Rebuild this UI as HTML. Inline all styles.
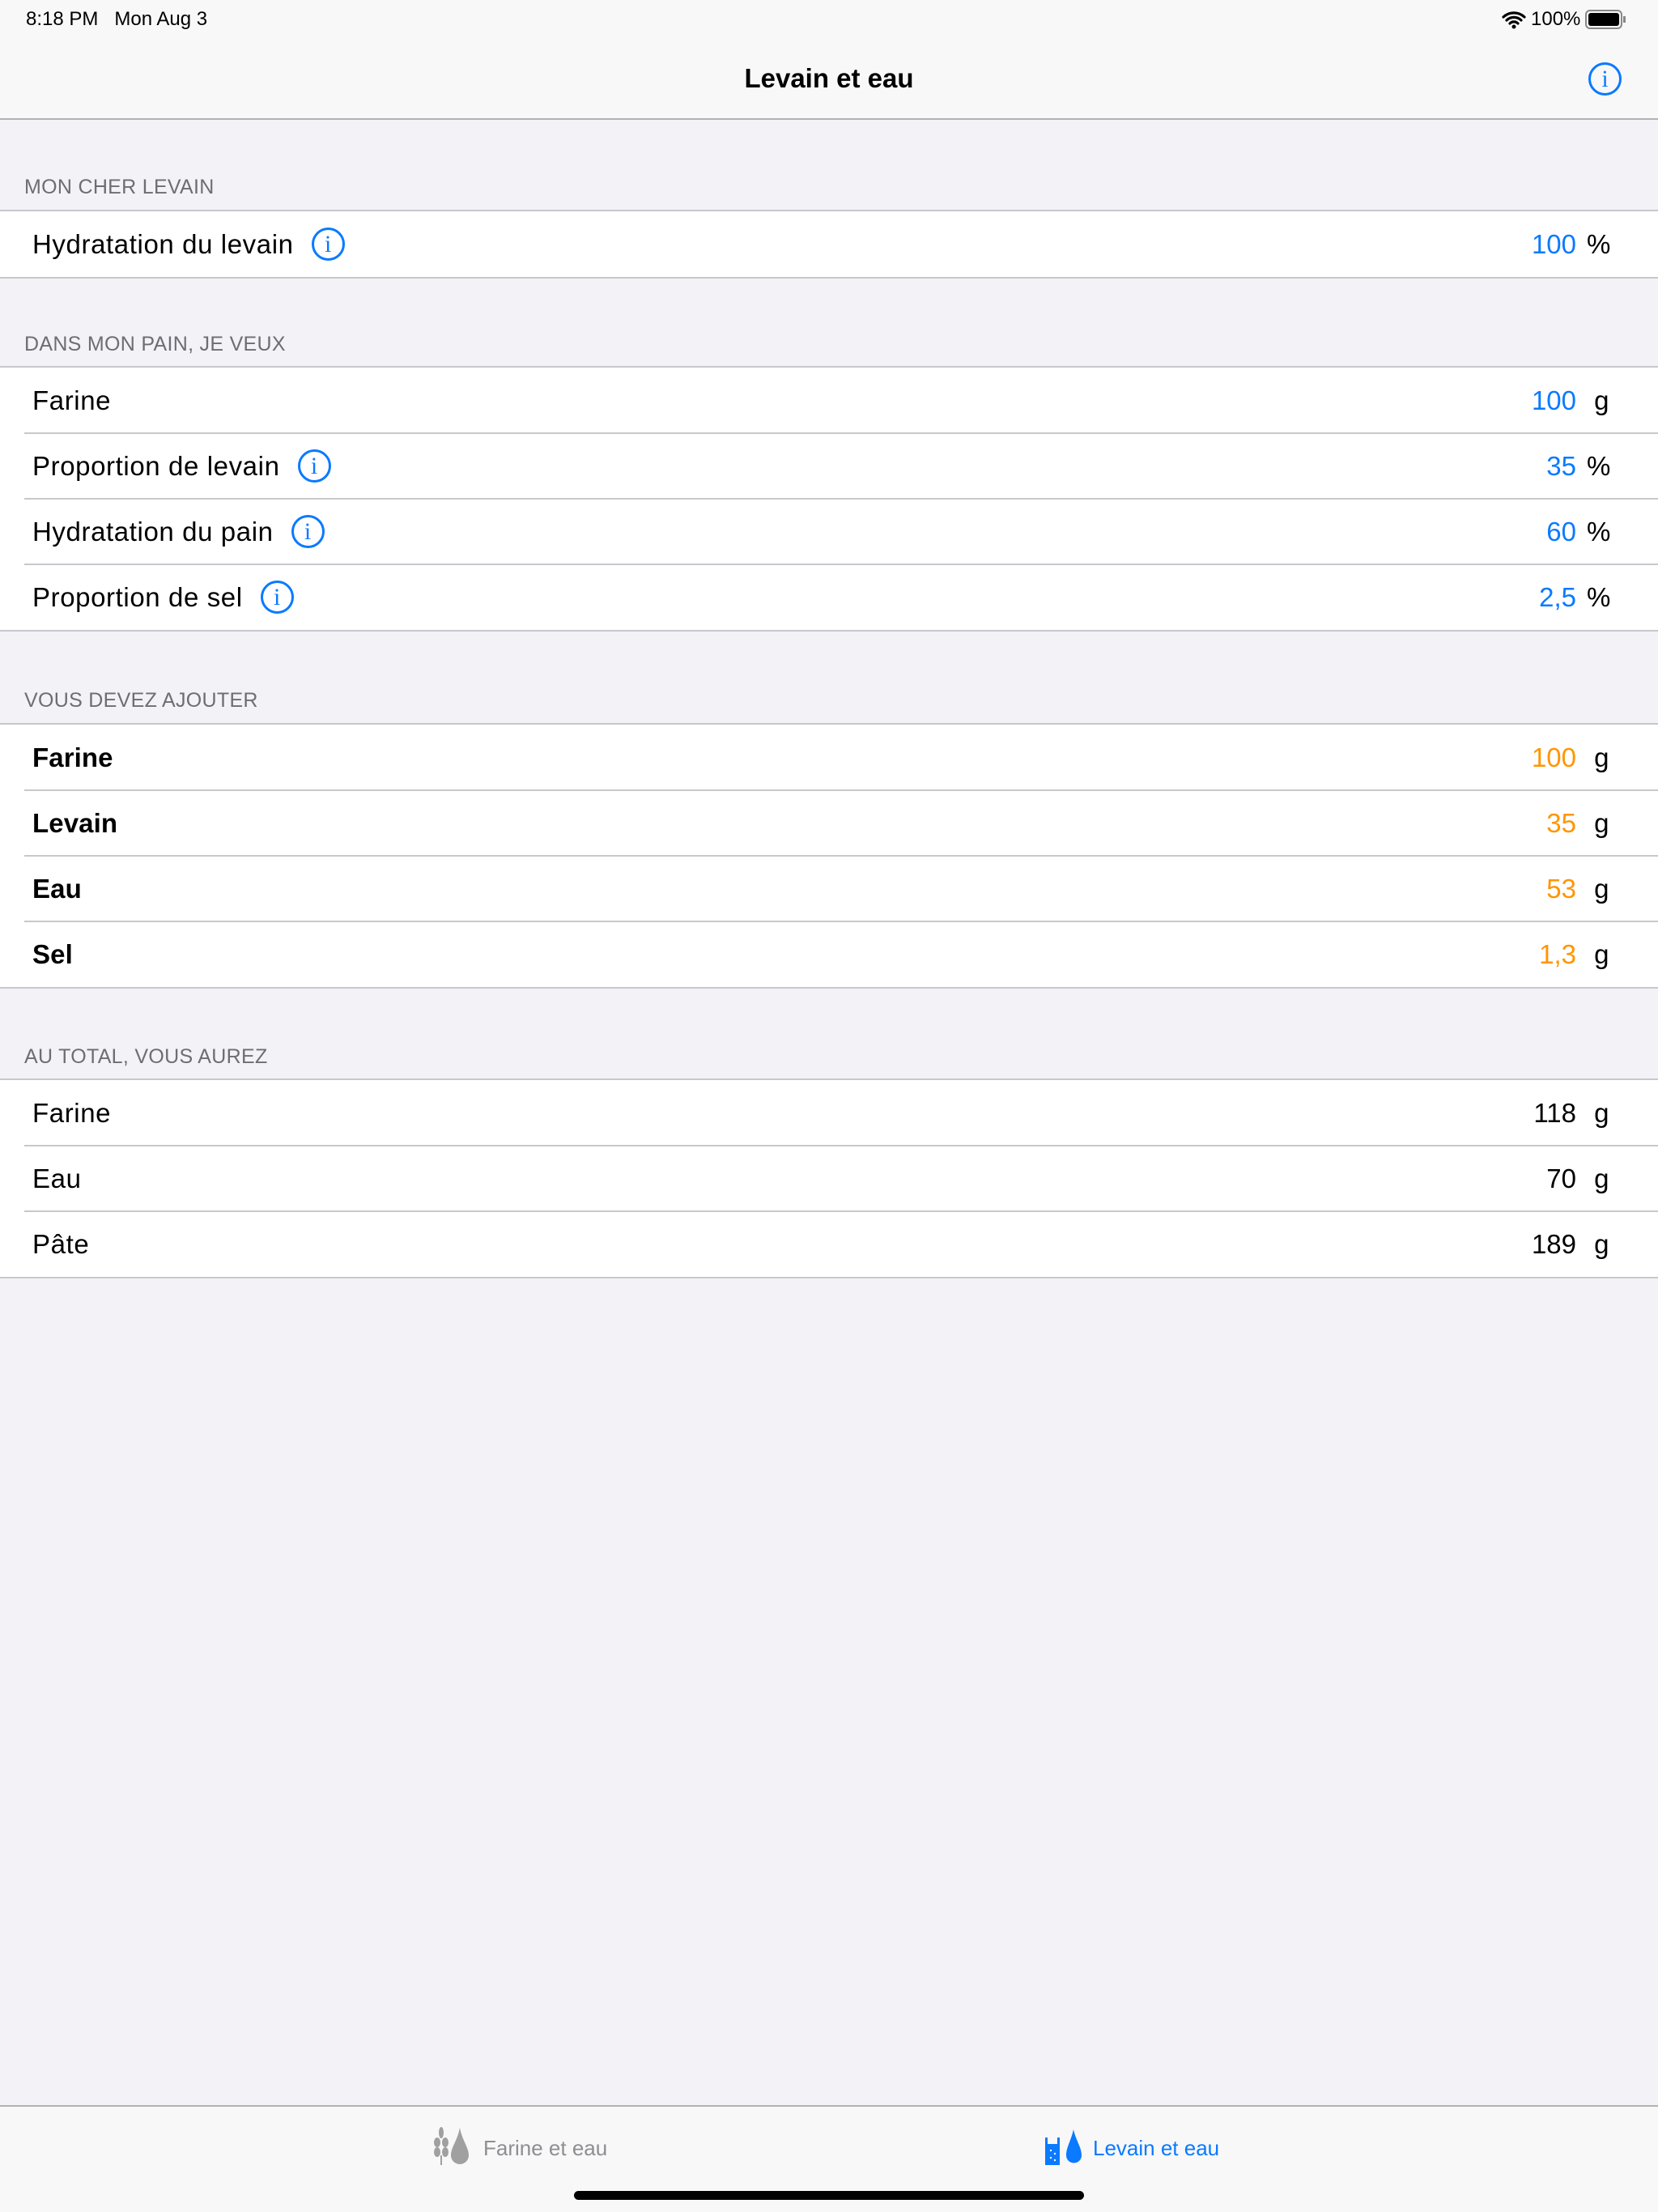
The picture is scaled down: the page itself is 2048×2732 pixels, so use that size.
<!DOCTYPE html>
<html><head><meta charset="utf-8"><style>
*{margin:0;padding:0;box-sizing:border-box}
body{width:2048px;height:2732px;background:#f2f2f7;font-family:"Liberation Sans",Arial,sans-serif;position:relative;overflow:hidden;color:#000}
.abs{position:absolute}
.nav{left:0;top:0;width:2048px;height:148px;background:#f8f8f8;border-bottom:2px solid #b2b2b2}
.hdr{position:absolute;left:30px;font-size:25px;color:#6d6d72;letter-spacing:0.3px}
.grp{position:absolute;left:0;width:2048px;background:#fff;border-top:2px solid #c8c7cc;border-bottom:2px solid #c8c7cc}
.row{position:relative;height:81px;display:flex;align-items:center;padding-left:40px;font-size:33px;letter-spacing:0.6px}
.row+.row::before{content:"";position:absolute;left:30px;right:0;top:-1px;height:2px;background:#c8c7cc}
.row .val{position:absolute;right:101px;font-size:33px;letter-spacing:0}
.row .unit{position:absolute;left:1960px;font-size:33px;letter-spacing:0}
.b{color:#0a7aff}.o{color:#ff9500}
.bold{font-weight:bold;letter-spacing:0.1px}
.info{display:inline-block;width:41px;height:41px;border:3px solid #0a7aff;border-radius:50%;color:#0a7aff;font-family:"Liberation Serif",serif;font-size:30px;line-height:35px;text-align:center;margin-left:22px;letter-spacing:0}
</style></head><body>
<div class="abs nav"></div>
<div class="abs" style="left:32px;top:10px;font-size:24px">8:18 PM&nbsp;&nbsp;&nbsp;Mon Aug 3</div>
<div class="abs" style="left:1855px;top:10px;font-size:24px;display:flex;align-items:center">
<svg width="30" height="24" viewBox="0 0 30 24"><path d="M2 9a19 19 0 0 1 26 0M6 13a13 13 0 0 1 18 0M10 17a7 7 0 0 1 10 0" stroke="#000" stroke-width="3.2" fill="none" stroke-linecap="round"/><circle cx="15" cy="21" r="2.5"/></svg>
<span style="margin-left:6px">100%</span>
<span style="display:inline-block;margin-left:6px;width:46px;height:24px;border:2px solid #888;border-radius:6px;padding:2px"><span style="display:block;width:100%;height:100%;background:#000;border-radius:3px"></span></span>
<span style="display:inline-block;width:3px;height:8px;background:#888;margin-left:1px"></span>
</div>
<div class="abs" style="left:0;width:2048px;top:78px;text-align:center;font-size:33px;font-weight:bold">Levain et eau</div>
<div class="abs info" style="left:1962px;top:77px;margin:0">i</div>

<div class="hdr" style="top:217px">MON CHER LEVAIN</div>
<div class="grp" style="top:259px">
<div class="row">Hydratation du levain<span class="info">i</span><span class="val b">100</span><span class="unit">%</span></div>
</div>

<div class="hdr" style="top:411px">DANS MON PAIN, JE VEUX</div>
<div class="grp" style="top:452px">
<div class="row">Farine<span class="val b">100</span><span class="unit">&nbsp;g</span></div>
<div class="row">Proportion de levain<span class="info">i</span><span class="val b">35</span><span class="unit">%</span></div>
<div class="row">Hydratation du pain<span class="info">i</span><span class="val b">60</span><span class="unit">%</span></div>
<div class="row">Proportion de sel<span class="info">i</span><span class="val b">2,5</span><span class="unit">%</span></div>
</div>

<div class="hdr" style="top:851px">VOUS DEVEZ AJOUTER</div>
<div class="grp" style="top:893px">
<div class="row bold">Farine<span class="val o" style="font-weight:normal">100</span><span class="unit" style="font-weight:normal">&nbsp;g</span></div>
<div class="row bold">Levain<span class="val o" style="font-weight:normal">35</span><span class="unit" style="font-weight:normal">&nbsp;g</span></div>
<div class="row bold">Eau<span class="val o" style="font-weight:normal">53</span><span class="unit" style="font-weight:normal">&nbsp;g</span></div>
<div class="row bold">Sel<span class="val o" style="font-weight:normal">1,3</span><span class="unit" style="font-weight:normal">&nbsp;g</span></div>
</div>

<div class="hdr" style="top:1291px">AU TOTAL, VOUS AUREZ</div>
<div class="grp" style="top:1332px">
<div class="row">Farine<span class="val">118</span><span class="unit">&nbsp;g</span></div>
<div class="row">Eau<span class="val">70</span><span class="unit">&nbsp;g</span></div>
<div class="row">Pâte<span class="val">189</span><span class="unit">&nbsp;g</span></div>
</div>

<div class="abs" style="left:0;top:2600px;width:2048px;height:132px;background:#f8f8f8;border-top:2px solid #b2b2b2"></div>
<svg class="abs" style="left:535px;top:2626px" width="50" height="50" viewBox="0 0 50 50"><g fill="#a0a0a0"><ellipse cx="10" cy="8" rx="3" ry="7"/><ellipse cx="5" cy="20" rx="4" ry="6"/><ellipse cx="15" cy="20" rx="4" ry="6"/><ellipse cx="5" cy="32" rx="4" ry="6"/><ellipse cx="15" cy="32" rx="4" ry="6"/><rect x="9" y="36" width="2" height="12"/><path d="M33 2C30 18 22 26 22 36a11 11 0 0 0 22 0C44 26 36 18 33 2z"/></g></svg>
<div class="abs" style="left:597px;top:2638px;font-size:26px;color:#8e8e93">Farine et eau</div>
<svg class="abs" style="left:1290px;top:2628px" width="50" height="48" viewBox="0 0 50 48"><g fill="#0a7aff"><path d="M1 12h3v8h12v-8h3v34H1z"/><path d="M36 2C33 16 27 24 27 34a9.5 9.5 0 0 0 19 0C46 24 39 16 36 2z"/></g><g fill="#fff"><circle cx="8" cy="28" r="1.2"/><circle cx="13" cy="32" r="1.2"/><circle cx="8" cy="37" r="1.2"/><circle cx="13" cy="40" r="1.2"/></g></svg>
<div class="abs" style="left:1350px;top:2638px;font-size:26px;color:#0a7aff">Levain et eau</div>
<div class="abs" style="left:709px;top:2706px;width:630px;height:11px;border-radius:6px;background:#000"></div>
</body></html>
